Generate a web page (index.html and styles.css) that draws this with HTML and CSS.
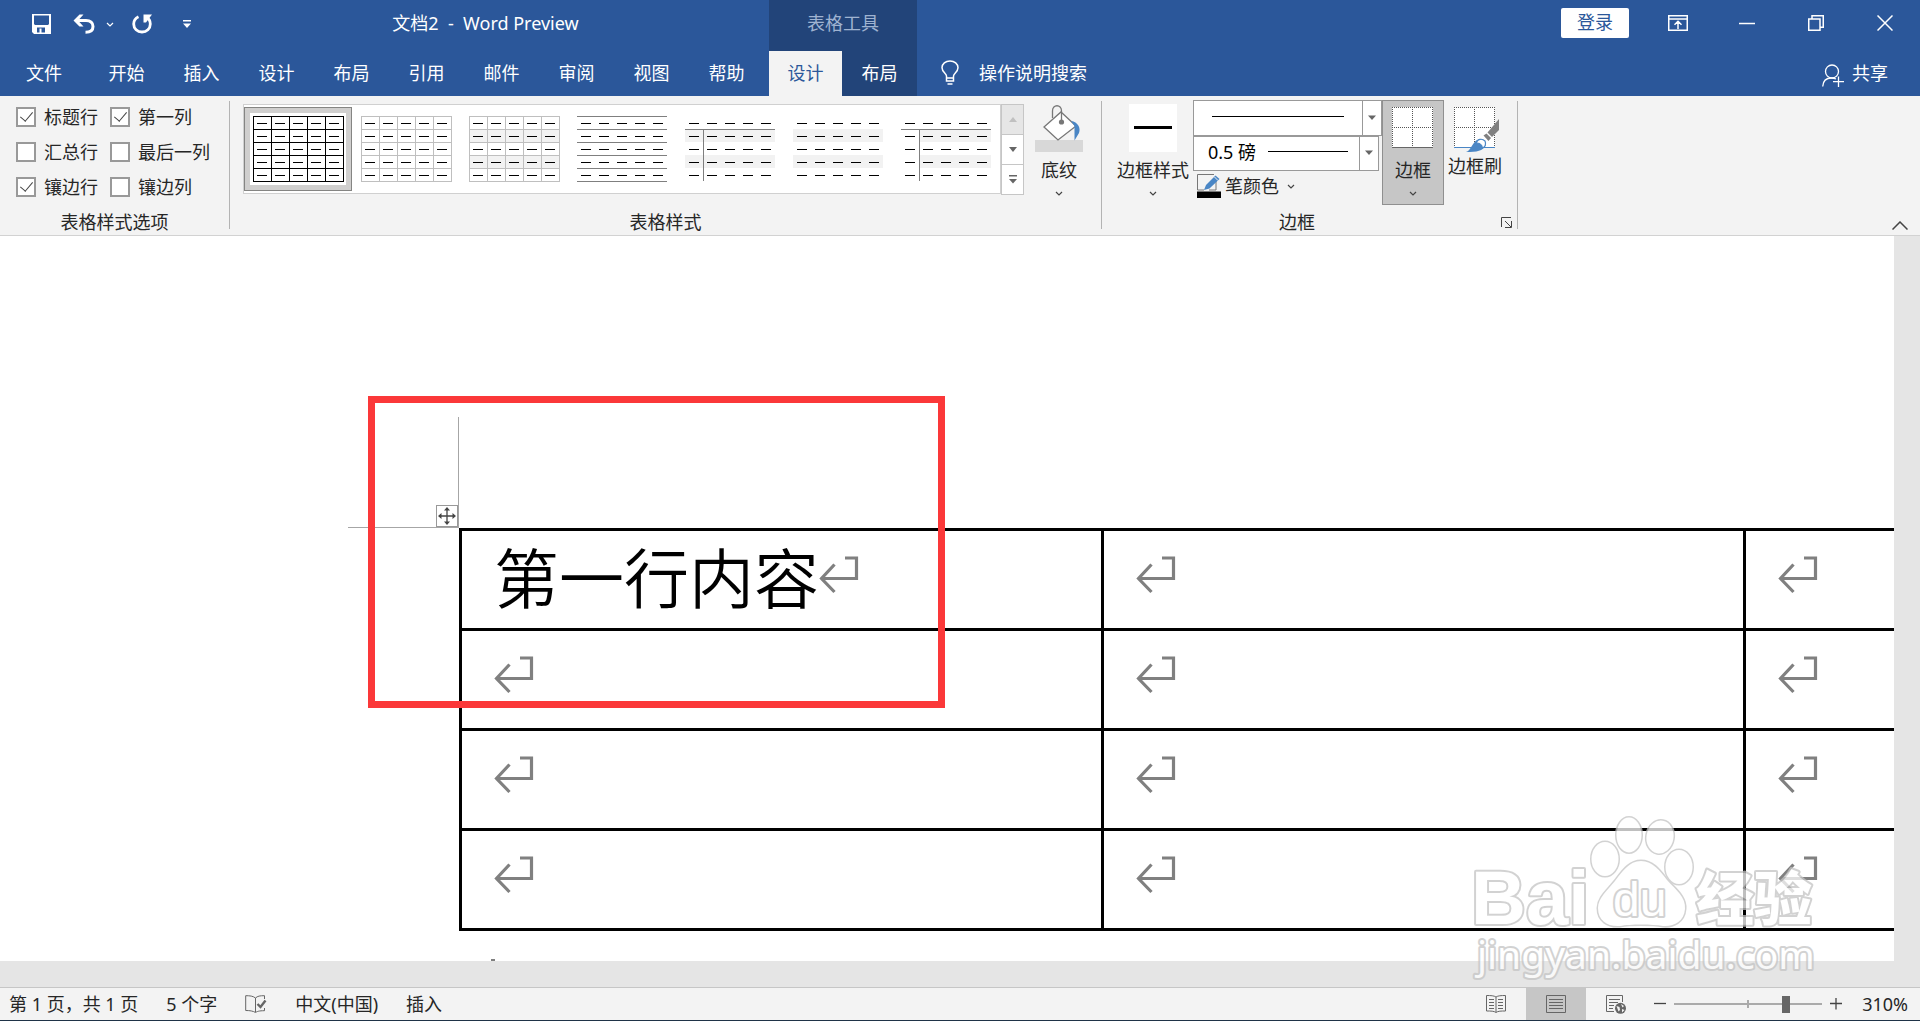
FILE: index.html
```
<!DOCTYPE html>
<html lang="zh-CN">
<head>
    <meta charset="UTF-8">
    <meta name="viewport" content="width=device-width, initial-scale=1.0">
    <title>文档2 - Word Preview</title>
    <link rel="stylesheet" href="styles.css">
</head>
<body>

    <!-- Shared shapes -->
    <svg class="defs" aria-hidden="true">
        <symbol id="dashes" viewBox="0 0 96 72">
            <path d="M7 10.5H96M7 23.5H96M7 36.5H96M7 49.5H96M7 62.5H96" stroke="#000" stroke-dasharray="10 8"/>
        </symbol>
        <symbol id="grid" viewBox="0 0 96 72">
            <path d="M3 3.5H94M3 16.5H94M3 29.5H94M3 42.5H94M3 55.5H94M3 68.5H94M3.5 3V69M21.5 3V69M39.5 3V69M57.5 3V69M75.5 3V69M93.5 3V69" stroke="currentColor"/>
        </symbol>
        <symbol id="bands" viewBox="0 0 96 72">
            <path d="M3 16H93V29H3ZM3 42H93V55H3Z" fill="#f2f2f2"/>
        </symbol>
        <symbol id="chevron" viewBox="0 0 8 5">
            <path d="M1 1L4 4L7 1" fill="none" stroke="currentColor" stroke-width="1.2"/>
        </symbol>
        <symbol id="return" viewBox="0 0 40 38">
            <path d="M26 2H37.500V22.500H3M15.500 8.500L2.500 22.500L15.500 36" fill="none" stroke="#808080" stroke-width="3.200"/>
        </symbol>
    </svg>

    <header class="header">
        <div class="header-main">
            <div class="title-row">
                <div class="quick-access">
                    <button class="icon-btn" aria-label="保存">
                        <svg width="19" height="20" viewBox="0 0 19 20"><path fill-rule="evenodd" d="M0 0H19V20H2L0 18ZM2 1.500V10L3 11H16L17 10V1.500ZM5 13.500V18.500H7.500V14.500H9.500V18.500H13V13.500Z" fill="#fff"/></svg>
                    </button>
                    <button class="icon-btn undo" aria-label="撤消">
                        <svg width="22" height="20" viewBox="0 0 22 20"><path d="M4 6.500H13C17.500 6.500 20 9 20 12.500C20 16 17.500 18.300 12.500 18.300" fill="none" stroke="#fff" stroke-width="3"/><path d="M6.500 .5H10.500L5 6.500L10.500 12.500H6.500L.5 6.500Z" fill="#fff"/></svg>
                    </button>
                    <button class="icon-btn undo-more" aria-label="更多撤消">
                        <svg width="8" height="5"><use href="#chevron"/></svg>
                    </button>
                    <button class="icon-btn redo" aria-label="重复">
                        <svg width="20" height="20" viewBox="0 0 20 20"><path d="M6.500 2.700C3.500 4.100 1.700 6.700 1.700 10C1.700 14.700 5.300 18 10 18S18.300 14.700 18.300 10C18.300 7 17 4.700 14.500 3" fill="none" stroke="#fff" stroke-width="2.800"/><path d="M11.500 .5H20L14 8.500H11.500Z" fill="#fff"/></svg>
                    </button>
                    <button class="icon-btn" aria-label="自定义快速访问工具栏">
                        <svg width="8" height="8" viewBox="0 0 8 8"><path d="M0 0H8V1.500H0ZM0 3.500H8L4 8Z" fill="#fff"/></svg>
                    </button>
                </div>
                <div class="doc-title">文档2 &nbsp;- &nbsp;Word Preview</div>
            </div>
            <nav class="tab-row">
                <button class="tab file-tab">文件</button>
                <button class="tab">开始</button>
                <button class="tab">插入</button>
                <button class="tab">设计</button>
                <button class="tab">布局</button>
                <button class="tab">引用</button>
                <button class="tab">邮件</button>
                <button class="tab">审阅</button>
                <button class="tab">视图</button>
                <button class="tab">帮助</button>
            </nav>
        </div>

        <div class="header-context">
            <div class="context-title">表格工具</div>
            <nav class="tab-row">
                <button class="tab active">设计</button>
                <button class="tab">布局</button>
            </nav>
        </div>

        <div class="header-side">
            <div class="window-row">
                <button class="login-btn">登录</button>
                <button class="window-btn" aria-label="功能区显示选项">
                    <svg width="20" height="16" viewBox="0 0 20 16"><path d="M.75 .75H19.250V15.250H.75ZM1 4H19M10 14V7M6.500 9.800L10 6.300L13.500 9.800" fill="none" stroke="#fff" stroke-width="1.500"/></svg>
                </button>
                <button class="window-btn" aria-label="最小化">
                    <svg width="16" height="16" viewBox="0 0 16 16"><path d="M0 8.500H16" stroke="#fff" stroke-width="1.500"/></svg>
                </button>
                <button class="window-btn" aria-label="还原">
                    <svg width="16" height="16" viewBox="0 0 16 16"><path d="M.75 4H12V15.250H.75ZM4 4V.75H15.250V12.250H12" fill="none" stroke="#fff" stroke-width="1.500"/></svg>
                </button>
                <button class="window-btn" aria-label="关闭">
                    <svg width="16" height="16" viewBox="0 0 16 16"><path d="M.5 .5L15.500 15.500M15.500 .5L.5 15.500" stroke="#fff" stroke-width="1.500"/></svg>
                </button>
            </div>
            <div class="search-row">
                <button class="tell-me">
                    <svg width="18" height="25" viewBox="0 0 18 25"><path d="M5.500 18V16C5.500 13.500 1 12 1 7.800C1 3.800 4.500 1 9 1S17 3.800 17 7.800C17 12 12.500 13.500 12.500 16V18ZM5.500 18V21H12.500V18M6.500 24H11.500" fill="none" stroke="#fff" stroke-width="1.500"/></svg>
                    操作说明搜索
                </button>
                <button class="share-btn">
                    <svg width="22" height="24" viewBox="0 0 22 24"><circle cx="10" cy="7.500" r="6.500" fill="none" stroke="#fff" stroke-width="1.300"/><path d="M.7 22.500C1 17 4.500 14 9.500 14C11.500 14 13 14.500 14 15M16.500 12.500V23M11 17.700H22" fill="none" stroke="#fff" stroke-width="1.300"/></svg>
                    共享
                </button>
            </div>
        </div>
    </header>

    <section class="ribbon">
        <!-- Table style options -->
        <div class="group">
            <div class="group-body style-options">
                <label><input type="checkbox" checked>标题行</label>
                <label><input type="checkbox" checked>第一列</label>
                <label><input type="checkbox">汇总行</label>
                <label><input type="checkbox">最后一列</label>
                <label><input type="checkbox" checked>镶边行</label>
                <label><input type="checkbox">镶边列</label>
            </div>
            <div class="group-name">表格样式选项</div>
        </div>
        <div class="divider"></div>

        <!-- Table styles -->
        <div class="group">
            <div class="group-body table-styles">
                <div class="gallery">
                    <button class="thumb selected" aria-label="网格型">
                        <svg width="96" height="72"><use href="#grid"/><use href="#dashes"/></svg>
                    </button>
                    <button class="thumb" aria-label="网格型浅色">
                        <svg width="96" height="72"><use href="#grid"/><use href="#dashes"/></svg>
                    </button>
                    <button class="thumb" aria-label="无格式表格 1">
                        <svg width="96" height="72"><use href="#bands"/><use href="#grid"/><use href="#dashes"/></svg>
                    </button>
                    <button class="thumb" aria-label="无格式表格 2">
                        <svg width="96" height="72"><path d="M3 3.500H93M3 16.500H93M3 29.500H93M3 42.500H93M3 55.500H93M3 68.500H93" stroke="#7f7f7f"/><use href="#dashes"/></svg>
                    </button>
                    <button class="thumb" aria-label="无格式表格 3">
                        <svg width="96" height="72"><use href="#bands"/><path d="M3 16.500H93M21.500 16V68" stroke="#7f7f7f"/><use href="#dashes"/></svg>
                    </button>
                    <button class="thumb" aria-label="无格式表格 4">
                        <svg width="96" height="72"><use href="#bands"/><use href="#dashes"/></svg>
                    </button>
                    <button class="thumb" aria-label="无格式表格 5">
                        <svg width="96" height="72"><path d="M21 16H93V29H21ZM21 42H93V55H21Z" fill="#f2f2f2"/><path d="M3 16.500H93M21.500 16V68" stroke="#7f7f7f"/><use href="#dashes"/></svg>
                    </button>
                </div>
                <div class="gallery-scroll">
                    <button disabled aria-label="上一行"><svg width="8" height="5" viewBox="0 0 8 5"><path d="M0 5L4 0L8 5Z" fill="#c0c0c0"/></svg></button>
                    <button aria-label="下一行"><svg width="8" height="5" viewBox="0 0 8 5"><path d="M0 0L4 5L8 0Z" fill="#666"/></svg></button>
                    <button aria-label="其他"><svg width="8" height="9" viewBox="0 0 8 9"><path d="M0 0H8V1.500H0ZM0 4L4 8.500L8 4Z" fill="#666"/></svg></button>
                </div>
                <button class="big-btn">
                    <svg width="48" height="48" viewBox="0 0 48 48"><path d="M0 36H48V48H0Z" fill="#d8d8d8"/><path d="M26 8L41 22L23 36L9 23Z" fill="#fff" stroke="#777" stroke-width="1.300"/><path d="M17.500 14V7C17.500 0 26.500 0 26.500 7V17" fill="none" stroke="#777" stroke-width="1.300"/><circle cx="26.500" cy="18" r="2.600" fill="#777"/><path d="M36 17C43 18 46 24 44 29L39.500 36.500V22Z" fill="#4a86c5"/></svg>
                    <span>底纹</span>
                    <svg class="drop" width="8" height="5"><use href="#chevron"/></svg>
                </button>
            </div>
            <div class="group-name">表格样式</div>
        </div>
        <div class="divider"></div>

        <!-- Borders -->
        <div class="group">
            <div class="group-body borders">
                <button class="big-btn">
                    <svg width="48" height="48" viewBox="0 0 48 48"><path d="M0 0H48V48H0Z" fill="#fff"/><path d="M5 23.500H43" stroke="#000" stroke-width="3"/></svg>
                    <span>边框样式</span>
                    <svg class="drop" width="8" height="5"><use href="#chevron"/></svg>
                </button>
                <div class="pen-tools">
                    <div class="combo">
                        <select aria-label="笔样式"><option></option></select>
                        <svg width="189" height="36" viewBox="0 0 189 36"><path d="M19 16.500H151" stroke="#000"/><path d="M169.500 0V36" stroke="#999"/><path d="M175 15.500H183L179 20Z" fill="#666"/></svg>
                    </div>
                    <div class="combo combo-weight">
                        <select aria-label="笔划粗细"><option>0.5 磅</option></select>
                        <svg width="186" height="35" viewBox="0 0 186 35"><path d="M75 15.500H155" stroke="#000"/><path d="M166.500 0V35" stroke="#999"/><path d="M172 14.500H180L176 19Z" fill="#666"/></svg>
                    </div>
                    <button class="pen-color">
                        <svg width="24" height="24" viewBox="0 0 24 24"><path d="M17 .5H.5V16H7M19 6V16H12" fill="none" stroke="#777"/><path d="M7 16L9 11L18.500 1.500L22.500 5L12.500 14.500Z" fill="#4a86c5"/><path d="M17.500 3L21 6.500" stroke="#f3f3f3"/><path d="M0 17.500H24V24H0Z"/></svg>
                        笔颜色
                        <svg class="drop" width="8" height="5"><use href="#chevron"/></svg>
                    </button>
                </div>
                <button class="big-btn pressed">
                    <svg width="48" height="48" viewBox="0 0 48 48"><path d="M3 3H44V44H3Z" fill="#fff"/><path d="M3 3.500H44M3 23.500H44M3.500 3V43M23.500 3V43M43.500 3V43" stroke="#555" stroke-dasharray="1 1"/><path d="M3 43.500H44" stroke="#666"/></svg>
                    <span>边框</span>
                    <svg class="drop" width="8" height="5"><use href="#chevron"/></svg>
                </button>
                <button class="big-btn painter">
                    <svg width="48" height="48" viewBox="0 0 48 48"><path d="M3 3H44V44H3Z" fill="#fff"/><path d="M3 3.500H44M3 23.500H44M3.500 3V43M23.500 3V43M43.500 3V43" stroke="#555" stroke-dasharray="1 1"/><path d="M3 43.500H44" stroke="#4a86c5"/><path d="M48 15V26L41 33L36.500 28.500Z" fill="#808080"/><path d="M32.500 31.500L35.500 29.500L40 34L37.500 37Z" fill="#808080"/><path d="M15 48C20 46.500 21 39 26 36C31 33.500 36 37 34.500 41.500C32 47 26 48 15 48Z" fill="#4a86c5"/><path d="M25.500 39C26 35 31 34 34 37C35.500 40.500 34 43 31.500 44C31 41 29 39 25.500 39Z" fill="#fff" stroke="#4a86c5" stroke-width="1.200"/></svg>
                    <span>边框刷</span>
                </button>
            </div>
            <div class="group-footer">
                <div class="group-name">边框</div>
                <button class="launcher" aria-label="边框设置">
                    <svg width="11" height="11" viewBox="0 0 11 11"><path d="M.5 10V.5H10M4 4L10 10M10.500 4V10.500H4" fill="none" stroke="#444"/></svg>
                </button>
            </div>
        </div>
        <div class="divider"></div>

        <button class="collapse-btn" aria-label="折叠功能区">
            <svg width="16" height="9" viewBox="0 0 16 9"><path d="M.5 8.500L8 1L15.500 8.500" fill="none" stroke="#444" stroke-width="1.500"/></svg>
        </button>
    </section>

    <main class="workspace">
        <div class="page">
            <span class="margin-mark"></span>
            <button class="move-handle" aria-label="移动表格">
                <svg width="18" height="18" viewBox="0 0 18 18"><path d="M9 2V16M2 9H16" stroke="#444" stroke-width="1.300"/><path d="M9 0L12 3.500H6ZM9 18L12 14.500H6ZM0 9L3.500 6V12ZM18 9L14.500 6V12Z" fill="#444"/></svg>
            </button>
            <table class="doc-table">
                <tr>
                    <td><p>第一行内容<svg width="40" height="38"><use href="#return"/></svg></p></td>
                    <td><p><svg width="40" height="38"><use href="#return"/></svg></p></td>
                    <td><p><svg width="40" height="38"><use href="#return"/></svg></p></td>
                </tr>
                <tr>
                    <td><p><svg width="40" height="38"><use href="#return"/></svg></p></td>
                    <td><p><svg width="40" height="38"><use href="#return"/></svg></p></td>
                    <td><p><svg width="40" height="38"><use href="#return"/></svg></p></td>
                </tr>
                <tr>
                    <td><p><svg width="40" height="38"><use href="#return"/></svg></p></td>
                    <td><p><svg width="40" height="38"><use href="#return"/></svg></p></td>
                    <td><p><svg width="40" height="38"><use href="#return"/></svg></p></td>
                </tr>
                <tr>
                    <td><p><svg width="40" height="38"><use href="#return"/></svg></p></td>
                    <td><p><svg width="40" height="38"><use href="#return"/></svg></p></td>
                    <td><p><svg width="40" height="38"><use href="#return"/></svg></p></td>
                </tr>
            </table>
            <span class="next-mark"></span>
            <div class="highlight"></div>
        </div>

        <svg class="watermark" width="360" height="180" viewBox="0 0 360 180">
            <g class="mark-shape">
                <ellipse cx="145" cy="45" rx="13.500" ry="17"/>
                <ellipse cx="169" cy="21" rx="12.500" ry="17.500"/>
                <ellipse cx="200" cy="23" rx="13.500" ry="16.500" transform="rotate(10 200 23)"/>
                <ellipse cx="219" cy="53" rx="13.500" ry="17"/>
                <path d="M181 47C193 47 200 57 207 66C216 76 226 83 225 95C224 108 213 113 203 112C192 110 170 110 160 112C148 113 138 107 138 94C138 84 147 77 155 67C162 58 169 47 181 47Z"/>
            </g>
            <g class="mark-text">
                <text class="mark-bai" x="11" y="110">Bai</text>
                <text class="mark-du" x="153" y="102">du</text>
                <text class="mark-cn" x="236" y="106">经验</text>
                <text class="mark-url" x="17" y="155">jingyan.baidu.com</text>
            </g>
        </svg>
    </main>

    <footer class="status-bar">
        <span>第 1 页，共 1 页</span>
        <span>5 个字</span>
        <button class="icon-btn" aria-label="校对">
            <svg width="22" height="18" viewBox="0 0 22 18"><path d="M10.500 17V3C8 1 5 .7 .7 .7V15.500C5 15.500 8 16 10.500 17.500C12 16.500 14 15.700 19.500 15.700V13M10.500 3C12.500 1 15 .7 19.500 .7V4" fill="none" stroke="#666"/><path d="M12.500 9L15.500 12L20.500 5.500" fill="none" stroke="#666" stroke-width="2.400"/></svg>
        </button>
        <span>中文(中国)</span>
        <span>插入</span>

        <div class="view-tools">
            <button class="view-btn" aria-label="阅读视图">
                <svg width="20" height="18" viewBox="0 0 20 18"><path d="M10 2C8 .7 5 .5 .5 .5V16C5 16 8 16 10 17.500C12 16 15 16 19.500 16V.5C15 .5 12 .7 10 2ZM10 2V17M3 4.500H8M3 7.500H8M3 10.500H8M3 13.500H8M12 4.500H17M12 7.500H17M12 10.500H17M12 13.500H17" fill="none" stroke="#666"/></svg>
            </button>
            <button class="view-btn current" aria-label="页面视图">
                <svg width="20" height="18" viewBox="0 0 20 18"><path d="M.5 .5H19.500V17.500H.5ZM3 4.500H17M3 7.500H17M3 10.500H17M3 13.500H17" fill="none" stroke="#666"/></svg>
            </button>
            <button class="view-btn" aria-label="Web 版式视图">
                <svg width="20" height="19" viewBox="0 0 20 19"><path d="M8 16.500H.5V.5H16.500V7M3 4.500H14M3 7.500H12M3 10.500H8M3 13.500H7" fill="none" stroke="#666"/><circle cx="14.500" cy="13.300" r="5.500" fill="#666"/><path d="M10.500 11L13.500 12L14 15L12.500 16.500ZM15 9L18 11L16.500 12.500ZM16 14L18.500 15L16 17.500Z" fill="#f3f3f3"/></svg>
            </button>
            <button class="zoom-btn" aria-label="缩小"><svg width="12" height="12" viewBox="0 0 12 12"><path d="M0 5.500H12" stroke="#444" stroke-width="1.300"/></svg></button>
            <input class="zoom-slider" type="range" min="0" max="100" value="77" aria-label="缩放">
            <button class="zoom-btn" aria-label="放大"><svg width="12" height="12" viewBox="0 0 12 12"><path d="M0 5.500H12M6 0V11.500" stroke="#444" stroke-width="1.300"/></svg></button>
            <span class="zoom-level">310%</span>
        </div>
    </footer>

</body>
</html>
```
FILE: styles.css
```
* {
    margin: 0;
    padding: 0;
    box-sizing: border-box;
}

body {
    display: flex;
    flex-direction: column;
    height: 100vh;
    overflow: hidden;
    background-color: #e5e5e5;
    color: #262626;
    font-family: "Noto Sans", "Noto Sans CJK SC", sans-serif;
    font-size: 18px;
    line-height: 24px;
}

button {
    font: inherit;
    color: inherit;
    background: none;
    border: none;
    white-space: nowrap;
}

svg {
    display: block;
    flex: none;
}

.defs {
    position: absolute;
    width: 0;
    height: 0;
}

/* Header: title row on top, tab row below */
.header {
    display: flex;
    background-color: #2b579a;
    color: #fff;
}

.title-row,
.window-row,
.context-title {
    display: flex;
    align-items: center;
    height: 51px;
    padding-bottom: 6px;
}

.quick-access {
    display: flex;
    align-items: center;
    padding: 3px 0 0 32px;
}

.undo {
    margin-left: 22px;
}

.undo-more {
    margin-left: 11px;
}

.redo {
    margin: 0 31px 0 18px;
}

.doc-title {
    flex: 1;
    padding-left: 16px;
    text-align: center;
}

.tab-row {
    display: flex;
    height: 45px;
}

.tab {
    width: 75px;
    padding-bottom: 2px;
}

.file-tab {
    width: 88px;
    margin-right: 1px;
}

.header-main {
    padding-right: 5px;
}

.header-context {
    background-color: #224479;
}

.context-title {
    justify-content: center;
    color: #9fb3d1;
}

.tab.active {
    width: 73px;
    background-color: #f3f3f3;
    color: #2b579a;
}

.header-side {
    flex: 1;
}

.window-row {
    justify-content: flex-end;
    padding-right: 1px;
}

.login-btn {
    height: 30px;
    margin-right: 14px;
    padding: 0 16px 2px;
    background-color: #fff;
    border-radius: 2px;
    color: #2b579a;
}

.window-btn {
    display: flex;
    align-items: center;
    justify-content: center;
    width: 69px;
    height: 45px;
}

.search-row {
    display: flex;
    justify-content: space-between;
    height: 45px;
    padding: 0 32px 2px 24px;
}

.tell-me,
.share-btn {
    display: flex;
    align-items: center;
    gap: 20px;
}

.share-btn {
    gap: 8px;
}

.share-btn svg {
    margin-top: 6px;
}

/* Ribbon */
.ribbon {
    display: flex;
    height: 140px;
    background-color: #f3f3f3;
    border-bottom: 1px solid #d2d2d2;
}

.group {
    display: flex;
    flex-direction: column;
}

.group-body {
    flex: 1;
}

.group-name {
    flex: 1;
    max-height: 26px;
    line-height: 26px;
    text-align: center;
}

.group-footer {
    display: flex;
    height: 26px;
}

.divider {
    width: 1px;
    margin: 5px 0 6px;
    background-color: #b3b3b3;
}

.style-options {
    display: grid;
    grid-template-columns: 94px auto;
    grid-auto-rows: 35px;
    padding: 3px 19px 0 16px;
}

.style-options label {
    display: flex;
    align-items: center;
    gap: 8px;
}

.style-options input {
    display: flex;
    justify-content: center;
    width: 20px;
    height: 20px;
    appearance: none;
    background-color: #fff;
    border: 2px solid #999;
}

.style-options input:checked::before {
    content: "";
    width: 6px;
    height: 11px;
    border: solid #444;
    border-width: 0 1px 1px 0;
    transform: rotate(40deg);
}

.table-styles {
    display: flex;
    align-items: flex-start;
    padding: 8px 18px 0 13px;
}

.gallery {
    display: flex;
    height: 90px;
    padding-top: 2px;
    background-color: #fff;
    border: 1px solid #d0d0d0;
}

.thumb {
    width: 108px;
    height: 84px;
    padding: 5px;
    border: 1px solid transparent;
    color: #bfbfbf;
}

.thumb svg {
    background-color: #fff;
}

.thumb.selected {
    background-color: #d0cfce;
    border-color: #858583;
    color: #000;
}

.gallery-scroll {
    display: flex;
    flex-direction: column;
    width: 23px;
    height: 91px;
    margin-right: 11px;
    background-color: #fff;
    border: 1px solid #c6c6c6;
}

.gallery-scroll button {
    display: flex;
    flex: 1;
    align-items: center;
    justify-content: center;
}

.gallery-scroll button + button {
    border-top: 1px solid #c6c6c6;
}

.gallery-scroll button:disabled {
    background-color: #e6e6e6;
}

.big-btn {
    display: flex;
    flex-direction: column;
    align-items: center;
}

.big-btn span {
    margin: 6px 0 9px;
}

.drop {
    color: #444;
}

.borders {
    display: flex;
    align-items: flex-start;
    padding: 4px 15px 0;
}

.borders .big-btn {
    padding-top: 4px;
}

.borders .pressed {
    width: 62px;
    height: 105px;
    padding-top: 3px;
    background-color: #c6c6c6;
    border: 1px solid #8f8f8f;
}

.borders .painter {
    margin-left: 4px;
}

.big-btn.painter span {
    margin-top: 2px;
}

.pen-tools {
    width: 189px;
    margin-left: 4px;
}

.combo {
    position: relative;
    width: 189px;
    height: 36px;
}

.combo-weight {
    width: 186px;
    height: 35px;
}

.combo select {
    width: 100%;
    height: 100%;
    padding: 0 0 3px 14px;
    appearance: none;
    background-color: #fff;
    border: 1px solid #999;
    color: #000;
    font: inherit;
}

/* Line preview and arrow drawn over the select */
.combo svg {
    position: absolute;
    top: 0;
    left: 0;
    pointer-events: none;
}

.pen-color {
    display: flex;
    align-items: center;
    gap: 4px;
    padding: 3px 4px 0;
}

.pen-color .drop {
    margin-left: 4px;
}

.launcher {
    padding: 0 5px 0 9px;
}

.collapse-btn {
    align-self: flex-end;
    margin: 0 12px 5px auto;
}

/* Document area */
.workspace {
    position: relative;
    flex: 1;
    padding: 0 26px 26px 0;
    overflow: hidden;
}

.page {
    position: relative;
    height: 100%;
    padding: 292px 0 0 459px;
    overflow: hidden;
    background-color: #fff;
}

.margin-mark {
    position: absolute;
    top: 181px;
    left: 348px;
    width: 111px;
    height: 111px;
    border: solid #a6a6a6;
    border-width: 0 1px 1px 0;
}

.move-handle {
    position: absolute;
    top: 269px;
    left: 436px;
    padding: 1px;
    background-color: #fff;
    border: 1px solid #999;
}

.doc-table {
    width: 1929px;
    table-layout: fixed;
    border-collapse: collapse;
}

.doc-table td {
    height: 100px;
    padding: 0 32px;
    border: 3px solid #000;
    vertical-align: top;
}

.doc-table p {
    display: flex;
    height: 96px;
    color: #000;
    font-size: 65px;
    font-weight: 350;
    line-height: 94px;
}

.doc-table svg {
    margin-top: 25px;
}

/* Top of the paragraph mark below the table */
.next-mark {
    position: absolute;
    bottom: 0;
    left: 491px;
    width: 4px;
    height: 2px;
    background-color: #808080;
}

.highlight {
    position: absolute;
    top: 160px;
    left: 368px;
    width: 577px;
    height: 312px;
    border: 7px solid #fb3839;
}

.watermark {
    position: absolute;
    right: 100px;
    bottom: -7px;
    opacity: 0.75;
}

.mark-shape,
.mark-text {
    fill: #fff;
    stroke: #c4c4c4;
    stroke-width: 3px;
    paint-order: stroke;
}

.mark-text {
    stroke-width: 4px;
    stroke-linejoin: round;
}

.mark-bai {
    font-family: "Liberation Sans", sans-serif;
    font-size: 76px;
    font-weight: bold;
}

.mark-du {
    font-family: "Liberation Sans", sans-serif;
    font-size: 48px;
}

.mark-cn {
    font-family: "Noto Sans CJK SC", sans-serif;
    font-size: 58px;
    font-weight: 900;
}

.mark-url {
    font-size: 39px;
}

/* Status bar */
.status-bar {
    display: flex;
    align-items: center;
    gap: 28px;
    height: 34px;
    padding-left: 9px;
    background-color: #f3f3f3;
    border-top: 1px solid #c6c6c6;
    border-bottom: 1px solid #1f3348;
}

.view-tools {
    display: flex;
    align-items: center;
    height: 100%;
    margin-left: auto;
    padding-right: 12px;
}

.view-btn {
    display: flex;
    align-items: center;
    justify-content: center;
    width: 60px;
    height: 100%;
}

.view-btn.current {
    background-color: #c6c6c6;
}

.zoom-btn {
    padding: 0 8px;
}

.zoom-slider {
    width: 148px;
    height: 17px;
    appearance: none;
    background:
        linear-gradient(#aaa, #aaa) center / 2px 8px no-repeat,
        linear-gradient(#aaa, #aaa) center / 100% 2px no-repeat;
}

.zoom-slider::-webkit-slider-thumb {
    appearance: none;
    width: 8px;
    height: 17px;
    background-color: #666;
}

.zoom-level {
    margin-left: 12px;
}
```
